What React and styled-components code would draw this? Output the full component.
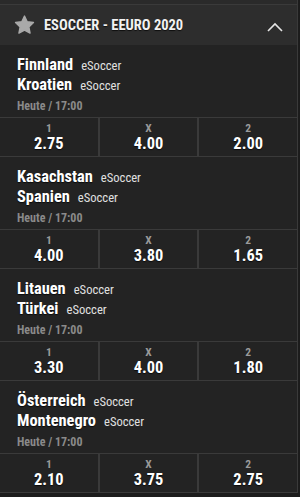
import React from "react";
import styled, { createGlobalStyle } from "styled-components";

const Global = createGlobalStyle`
  html, body { margin: 0; padding: 0; background: #1c1c1c; }
  body { font-family: "Roboto Condensed", Roboto, "Liberation Sans", sans-serif; -webkit-font-smoothing: antialiased; }
`;

const Panel = styled.div`
  width: 297px;
  border-right: 1px solid #3a3a3a;
  background: #232323;
`;

const TopStrip = styled.div`
  height: 4px;
  background: #2a2a2a;
  border-bottom: 1px solid #3a3a3a;
`;

const Header = styled.div`
  height: 40px;
  background: #2d2d2d;
  display: flex;
  align-items: center;
  padding: 0 14px 0 14px;
`;

const Title = styled.div`
  flex: 1;
  margin-left: 9px;
  color: #f2f2f2;
  font-weight: 700;
  font-size: 14.5px;
  text-shadow: 0 1px 1px rgba(0,0,0,0.7);
`;

const ChevronBox = styled.div`
  display: flex;
  padding-top: 4px;
`;

const Match = styled.div`
  height: 72px;
  box-sizing: border-box;
  padding: 10px 17px 0;
`;

const TeamLine = styled.div`
  line-height: 20px;
  height: 20px;
  white-space: nowrap;
`;

const Team = styled.span`
  color: #fff;
  font-weight: 700;
  font-size: 16.4px;
  text-shadow: 0 1px 1px rgba(0,0,0,0.7);
`;

const Sport = styled.span`
  color: #e0e0e0;
  font-size: 12.6px;
  margin-left: 8px;
`;

const When = styled.div`
  margin-top: 2px;
  line-height: 18px;
  color: #8a8a8a;
  font-weight: 700;
  font-size: 12px;
`;

const OddsRow = styled.div`
  height: 40px;
  box-sizing: border-box;
  border-top: 1px solid #3a3a3a;
  border-bottom: 1px solid #3a3a3a;
  display: grid;
  grid-template-columns: 1fr 1fr 1fr;
  column-gap: 2px;
  background: #3a3a3a;
`;

const Cell = styled.div`
  background: #232323;
  display: flex;
  flex-direction: column;
  align-items: center;
  padding-top: 3px;
`;

const Label = styled.div`
  color: #9a9a9a;
  font-size: 11.5px;
  font-weight: 700;
  line-height: 14px;
`;

const Value = styled.div`
  color: #fff;
  font-size: 16.4px;
  font-weight: 700;
  line-height: 18px;
  text-shadow: 0 1px 1px rgba(0,0,0,0.7);
`;

const Star = () => (
  <svg width="21" height="20" viewBox="0 0 24 23">
    <path
      d="M12 1.2l3.1 6.6 7.2.9-5.3 5 1.4 7.1L12 17.3l-6.4 3.5 1.4-7.1-5.3-5 7.2-.9z"
      fill="#a9a9a9"
      stroke="#a9a9a9"
      strokeWidth="1.6"
      strokeLinejoin="round"
    />
  </svg>
);

const Chevron = () => (
  <svg width="16" height="10" viewBox="0 0 16 10">
    <path d="M1 9 L8 2 L15 9" fill="none" stroke="#e6e6e6" strokeWidth="1.6" />
  </svg>
);

const matches = [
  { home: "Finnland", away: "Kroatien", odds: ["2.75", "4.00", "2.00"] },
  { home: "Kasachstan", away: "Spanien", odds: ["4.00", "3.80", "1.65"] },
  { home: "Litauen", away: "Türkei", odds: ["3.30", "4.00", "1.80"] },
  { home: "Österreich", away: "Montenegro", odds: ["2.10", "3.75", "2.75"] },
];

const labels = ["1", "X", "2"];

export default function App() {
  return (
    <>
      <Global />
      <Panel>
        <TopStrip />
        <Header>
          <Star />
          <Title>ESOCCER - EEURO 2020</Title>
          <ChevronBox>
            <Chevron />
          </ChevronBox>
        </Header>
        {matches.map((m) => (
          <React.Fragment key={m.home}>
            <Match>
              <TeamLine>
                <Team>{m.home}</Team>
                <Sport>eSoccer</Sport>
              </TeamLine>
              <TeamLine>
                <Team>{m.away}</Team>
                <Sport>eSoccer</Sport>
              </TeamLine>
              <When>Heute / 17:00</When>
            </Match>
            <OddsRow>
              {m.odds.map((o, i) => (
                <Cell key={i}>
                  <Label>{labels[i]}</Label>
                  <Value>{o}</Value>
                </Cell>
              ))}
            </OddsRow>
          </React.Fragment>
        ))}
      </Panel>
    </>
  );
}
